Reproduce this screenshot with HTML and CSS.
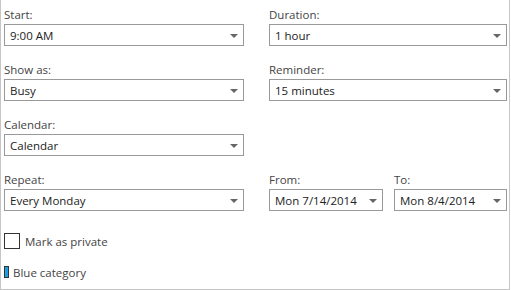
FILE: index.html
```html
<!DOCTYPE html>
<html lang="en">
<head>
    <meta charset="UTF-8">
    <title>Appointment details</title>
    <link rel="stylesheet" href="styles.css">
</head>
<body>
    <div class="panel">
        <div class="form-grid">
            <div class="field">
                <label>Start:</label>
                <div class="select"><span>9:00 AM</span><span class="arrow"></span></div>
            </div>
            <div class="field">
                <label>Duration:</label>
                <div class="select"><span>1 hour</span><span class="arrow"></span></div>
            </div>
            <div class="field">
                <label>Show as:</label>
                <div class="select"><span>Busy</span><span class="arrow"></span></div>
            </div>
            <div class="field">
                <label>Reminder:</label>
                <div class="select"><span>15 minutes</span><span class="arrow"></span></div>
            </div>
            <div class="field">
                <label>Calendar:</label>
                <div class="select"><span>Calendar</span><span class="arrow"></span></div>
            </div>
            <div class="field"></div>
            <div class="field">
                <label>Repeat:</label>
                <div class="select"><span>Every Monday</span><span class="arrow"></span></div>
            </div>
            <div class="range">
                <div class="field">
                    <label>From:</label>
                    <div class="select"><span>Mon 7/14/2014</span><span class="arrow"></span></div>
                </div>
                <div class="field">
                    <label>To:</label>
                    <div class="select"><span>Mon 8/4/2014</span><span class="arrow"></span></div>
                </div>
            </div>
        </div>
        <div class="check-row">
            <span class="checkbox"></span>
            <span>Mark as private</span>
        </div>
        <div class="category-row">
            <span class="category-swatch"></span>
            <span>Blue category</span>
        </div>
    </div>
</body>
</html>
```

FILE: styles.css
```css
body {
    margin: 0;
    padding: 0;
    background-color: white;
    font-family: "Open Sans", "Noto Sans", Arial, sans-serif;
    font-size: 11.5px;
    color: #444;
}
.panel {
    width: 510px;
    height: 290px;
    box-sizing: border-box;
    border-left: 1px solid #c6c6c6;
    border-right: 1px solid #c6c6c6;
    border-bottom: 1px solid #c6c6c6;
    padding: 8px 0 0 3px;
}
.form-grid {
    display: grid;
    grid-template-columns: 240px 238px;
    column-gap: 25px;
    row-gap: 17px;
}
.field {
    display: flex;
    flex-direction: column;
}
.field label {
    display: block;
    height: 16px;
    line-height: 14px;
    color: #444;
}
.select {
    height: 22px;
    box-sizing: border-box;
    border: 1px solid #999;
    display: flex;
    align-items: center;
    justify-content: space-between;
    padding: 0 5px;
    color: #222;
}
.arrow {
    width: 0;
    height: 0;
    border-left: 4px solid transparent;
    border-right: 4px solid transparent;
    border-top: 4px solid #666;
    margin-top: 1px;
}
.range {
    display: grid;
    grid-template-columns: 114px 113px;
    column-gap: 11px;
}
.check-row {
    display: flex;
    align-items: center;
    gap: 5px;
    margin-top: 22px;
    height: 16px;
}
.checkbox {
    width: 16px;
    height: 16px;
    box-sizing: border-box;
    border: 1px solid #333;
}
.category-row {
    display: flex;
    align-items: center;
    gap: 4px;
    margin-top: 15px;
    height: 16px;
}
.category-swatch {
    width: 5px;
    height: 12px;
    box-sizing: border-box;
    border: 1px solid #333;
    background-color: #1ba1e2;
}
```
